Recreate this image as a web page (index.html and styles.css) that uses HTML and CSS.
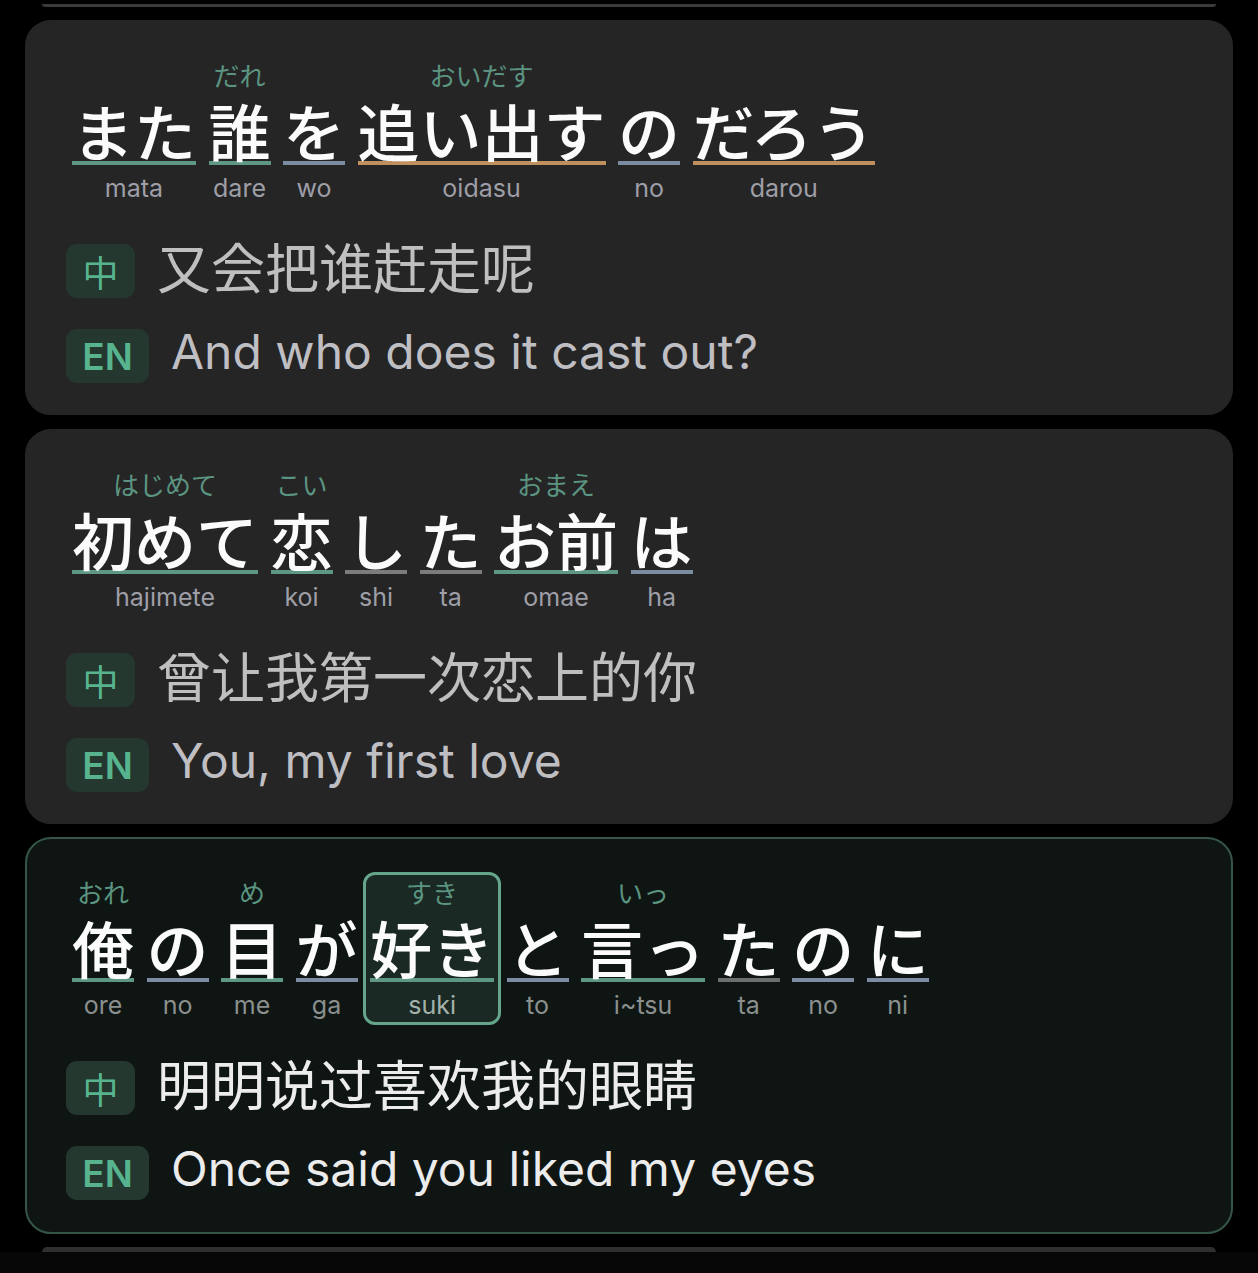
FILE: index.html
```html
<!DOCTYPE html>
<html lang="ja">
<head>
<meta charset="utf-8">
<title>Lyrics</title>
<link rel="stylesheet" href="styles.css">
</head>
<body>
<div class="list">
  <div class="peek-top"></div>

  <section class="card">
    <div class="words">
      <div class="word"><span class="furi"></span><span class="jp u-green">また</span><span class="roma">mata</span></div>
      <div class="word"><span class="furi">だれ</span><span class="jp u-green">誰</span><span class="roma">dare</span></div>
      <div class="word"><span class="furi"></span><span class="jp u-blue">を</span><span class="roma">wo</span></div>
      <div class="word"><span class="furi">おいだす</span><span class="jp u-tan">追い出す</span><span class="roma">oidasu</span></div>
      <div class="word"><span class="furi"></span><span class="jp u-blue">の</span><span class="roma">no</span></div>
      <div class="word"><span class="furi"></span><span class="jp u-tan">だろう</span><span class="roma">darou</span></div>
    </div>
    <div class="trans">
      <div class="row"><span class="badge badge-zh">中</span><span class="zh">又会把谁赶走呢</span></div>
      <div class="row"><span class="badge badge-en">EN</span><span class="en">And who does it cast out?</span></div>
    </div>
  </section>

  <section class="card">
    <div class="words">
      <div class="word"><span class="furi">はじめて</span><span class="jp u-green">初めて</span><span class="roma">hajimete</span></div>
      <div class="word"><span class="furi">こい</span><span class="jp u-green">恋</span><span class="roma">koi</span></div>
      <div class="word"><span class="furi"></span><span class="jp u-grey">し</span><span class="roma">shi</span></div>
      <div class="word"><span class="furi"></span><span class="jp u-grey">た</span><span class="roma">ta</span></div>
      <div class="word"><span class="furi">おまえ</span><span class="jp u-green">お前</span><span class="roma">omae</span></div>
      <div class="word"><span class="furi"></span><span class="jp u-blue">は</span><span class="roma">ha</span></div>
    </div>
    <div class="trans">
      <div class="row"><span class="badge badge-zh">中</span><span class="zh">曾让我第一次恋上的你</span></div>
      <div class="row"><span class="badge badge-en">EN</span><span class="en">You, my first love</span></div>
    </div>
  </section>

  <section class="card card-active">
    <div class="words">
      <div class="word"><span class="furi">おれ</span><span class="jp u-green">俺</span><span class="roma">ore</span></div>
      <div class="word"><span class="furi"></span><span class="jp u-blue">の</span><span class="roma">no</span></div>
      <div class="word"><span class="furi">め</span><span class="jp u-green">目</span><span class="roma">me</span></div>
      <div class="word"><span class="furi"></span><span class="jp u-blue">が</span><span class="roma">ga</span></div>
      <div class="word word-active"><span class="furi">すき</span><span class="jp u-green">好き</span><span class="roma">suki</span></div>
      <div class="word"><span class="furi"></span><span class="jp u-blue">と</span><span class="roma">to</span></div>
      <div class="word"><span class="furi">いっ</span><span class="jp u-green">言っ</span><span class="roma">i~tsu</span></div>
      <div class="word"><span class="furi"></span><span class="jp u-grey">た</span><span class="roma">ta</span></div>
      <div class="word"><span class="furi"></span><span class="jp u-blue">の</span><span class="roma">no</span></div>
      <div class="word"><span class="furi"></span><span class="jp u-blue">に</span><span class="roma">ni</span></div>
    </div>
    <div class="trans">
      <div class="row"><span class="badge badge-zh">中</span><span class="zh">明明说过喜欢我的眼睛</span></div>
      <div class="row"><span class="badge badge-en">EN</span><span class="en">Once said you liked my eyes</span></div>
    </div>
  </section>

  <div class="peek-bottom"></div>
</div>
<div class="footer"></div>
</body>
</html>
```

FILE: styles.css
```css
html, body {
  margin: 0;
  padding: 0;
  background: #000;
  height: 1273px;
  overflow: hidden;
}

.list {
  padding: 0 25px;
  display: flex;
  flex-direction: column;
}

.peek-top {
  margin: 4px 17px 0;
  height: 3px;
  background: #3a3a3b;
  border-radius: 0 0 6px 6px;
}

.card {
  margin-top: 13px;
  background: #252526;
  border: 2px solid #252526;
  border-radius: 26px;
  padding: 38px 39px 31px;
  height: 395px;
  box-sizing: border-box;
}

.card + .card {
  margin-top: 14px;
}

.card-active {
  background: #0e1513;
  border-color: #355646;
  height: 397px;
  margin-top: 13px !important;
}

.words {
  display: flex;
  align-items: flex-start;
  column-gap: 12.5px;
  padding-left: 6px;
}

.word {
  display: flex;
  flex-direction: column;
  align-items: center;
}

.furi {
  display: block;
  height: 30px;
  line-height: 30px;
  font-family: "Noto Sans CJK JP", sans-serif;
  font-size: 26px;
  color: #5b9480;
  white-space: nowrap;
}

.jp {
  display: block;
  margin-top: 9px;
  font-family: "Noto Sans CJK JP", sans-serif;
  font-size: 62px;
  line-height: 62px;
  font-weight: 500;
  color: #fbfbfb;
  border-bottom: 4px solid #5e9782;
  white-space: nowrap;
}

.u-green { border-bottom-color: #5e9782; }
.u-blue { border-bottom-color: #7b8ca1; }
.u-tan { border-bottom-color: #c08f5e; }
.u-grey { border-bottom-color: #7c7c7e; }

.card-active .u-grey { border-bottom-color: #6a706d; }
.card-active .u-blue { border-bottom-color: #7d8ba3; }

.roma {
  display: block;
  margin-top: 8px;
  font-family: "Inter", "Roboto", sans-serif;
  font-size: 25px;
  line-height: 30px;
  color: #9e9ea6;
  white-space: nowrap;
}

.card-active .roma { color: #8b908e; }

.word-active {
  background: #1a2923;
  border: 3px solid #65a58b;
  border-radius: 12px;
  padding: 2px 4px 2px;
  margin: -5px -7px -5px;
}

.word-active .roma { color: #a3b2ac; }

.trans {
  margin-top: 41px;
  display: flex;
  flex-direction: column;
  gap: 31px;
}

.row {
  display: flex;
  align-items: center;
  gap: 22px;
  height: 54px;
}

.badge {
  display: flex;
  align-items: center;
  justify-content: center;
  height: 54px;
  box-sizing: border-box;
  border-radius: 11px;
  background: #24382f;
  color: #57b48e;
}

.badge-zh {
  width: 69px;
  font-family: "Noto Sans CJK SC", sans-serif;
  font-size: 36px;
}

.badge-en {
  width: 83px;
  font-family: "Inter", "Roboto", sans-serif;
  font-size: 37px;
  font-weight: 600;
}

.zh {
  font-family: "Noto Sans CJK SC", sans-serif;
  font-size: 54px;
  line-height: 54px;
  padding-bottom: 10px;
  color: #bfbfbf;
  white-space: nowrap;
}

.en {
  font-family: "Inter", "Roboto", sans-serif;
  font-size: 48px;
  line-height: 54px;
  padding-bottom: 8px;
  color: #bfbfc3;
  white-space: nowrap;
}

.card-active .zh,
.card-active .en {
  color: #ececec;
}

.peek-bottom {
  margin: 13px 17px 0;
  height: 5px;
  background: #2f2f30;
  border-radius: 6px 6px 0 0;
}

.footer {
  height: 40px;
  background: #070707;
}
```
